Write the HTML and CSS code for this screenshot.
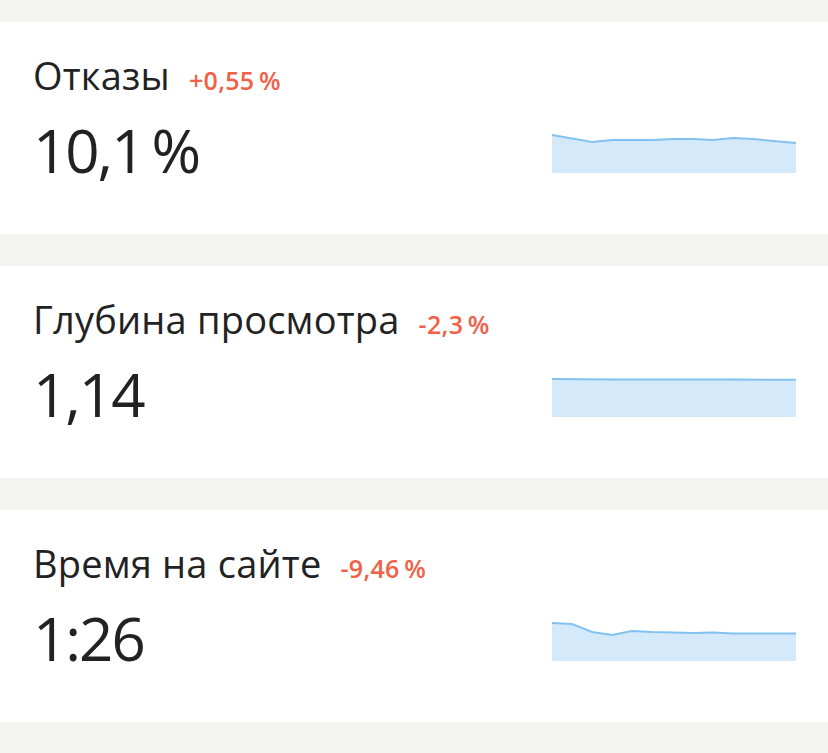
FILE: index.html
```html
<!DOCTYPE html>
<html lang="ru">
<head>
    <meta charset="UTF-8">
    <meta name="viewport" content="width=device-width, initial-scale=1.0">
    <title>Метрика</title>
    <link rel="stylesheet" href="styles.css">
</head>
<body>
    <div class="list">
        <div class="card">
            <div class="info">
                <div class="title">Отказы<span class="delta">+0,55&#8201;%</span></div>
                <div class="value">10,1&#8201;%</div>
            </div>
            <svg class="chart" viewBox="0 0 244 43" preserveAspectRatio="none">
                <polygon class="area" points="0,5 40,12 60,10 101,10 121,9 141,9 161,10 181,8 201,9 221,11 244,13 244,43 0,43"/>
                <polyline class="line" points="0,5 40,12 60,10 101,10 121,9 141,9 161,10 181,8 201,9 221,11 244,13"/>
            </svg>
        </div>

        <div class="card">
            <div class="info">
                <div class="title">Глубина просмотра<span class="delta">-2,3&#8201;%</span></div>
                <div class="value">1,14</div>
            </div>
            <svg class="chart" viewBox="0 0 244 43" preserveAspectRatio="none">
                <polygon class="area" points="0,5 60,5.5 120,5.5 180,5.5 244,5.8 244,43 0,43"/>
                <polyline class="line" points="0,5 60,5.5 120,5.5 180,5.5 244,5.8"/>
            </svg>
        </div>

        <div class="card">
            <div class="info">
                <div class="title">Время на сайте<span class="delta">-9,46&#8201;%</span></div>
                <div class="value">1:26</div>
            </div>
            <svg class="chart" viewBox="0 0 244 43" preserveAspectRatio="none">
                <polygon class="area" points="0,5 20,6 40,14 60,17 80,13 101,14 141,15 161,14.5 181,15.5 244,15.5 244,43 0,43"/>
                <polyline class="line" points="0,5 20,6 40,14 60,17 80,13 101,14 141,15 161,14.5 181,15.5 244,15.5"/>
            </svg>
        </div>
    </div>
</body>
</html>
```

FILE: styles.css
```css
body {
    margin: 0;
    padding: 0;
    background-color: #f3f3f1;
    font-family: "Open Sans", Arial, sans-serif;
    color: #222;
}

.list {
    display: flex;
    flex-direction: column;
    gap: 32px;
    padding: 22px 0 31px;
}

.card {
    background-color: #fff;
    padding: 31px 32px 54px 33px;
    display: flex;
    justify-content: space-between;
    align-items: flex-end;
}

.info {
    display: flex;
    flex-direction: column;
}

.title {
    font-size: 38px;
    line-height: 44px;
    height: 44px;
    letter-spacing: 0.2px;
}

.delta {
    font-size: 25px;
    font-weight: 600;
    color: #ef6248;
    margin-left: 19px;
    letter-spacing: 0.3px;
}

.value {
    font-size: 60px;
    line-height: 60px;
    height: 60px;
    margin-top: 23px;
    letter-spacing: -2px;
}

.chart {
    width: 244px;
    height: 43px;
    display: block;
    margin-bottom: 7px;
}

.area {
    fill: #d4eafa;
}

.line {
    fill: none;
    stroke: #82c2f1;
    stroke-width: 2;
}
```
